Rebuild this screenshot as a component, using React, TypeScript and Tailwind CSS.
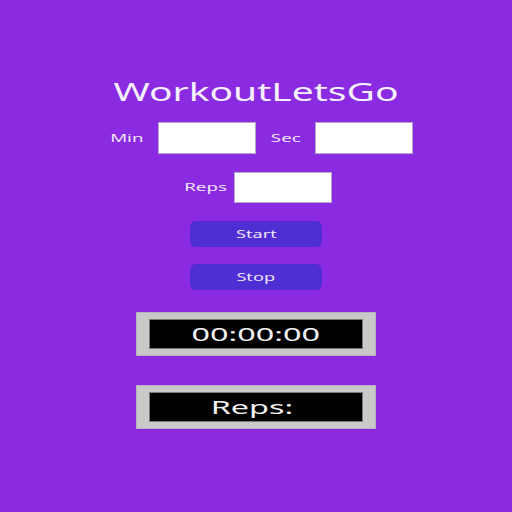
import React from "react";

const Stretch: React.FC<{ children: React.ReactNode; className?: string }> = ({
    children,
    className = "scale-x-150",
}) => (
    <span className={`inline-block origin-center whitespace-nowrap ${className}`}>
        {children}
    </span>
);

const Field: React.FC<{ label: string; labelWidth: string; gap: string; height?: string }> = ({
    label,
    labelWidth,
    gap,
    height = "h-[32px]",
}) => (
    <div className={`flex items-center ${gap}`}>
        <div className={`${labelWidth} flex justify-center text-[11px] text-[#efe4fb]`}>
            <Stretch className="scale-x-[1.7]">{label}</Stretch>
        </div>
        <div className={`w-[98px] ${height} bg-white border border-[#b4a8c4]`} />
    </div>
);

const Display: React.FC<{ text: string; className?: string; inner?: string }> = ({
    text,
    className = "",
    inner = "",
}) => (
    <div className={`w-[240px] h-[44px] bg-[#c9c9c9] border border-[#b8b0c0] px-[12px] py-[6px] ${className}`}>
        <div
            className={`w-full h-full bg-black border border-[#7a7a7a] flex items-center justify-center text-[18px] leading-none text-[#f2f2f2] ${inner}`}
        >
            <Stretch className="scale-x-[1.8]">{text}</Stretch>
        </div>
    </div>
);

const Button: React.FC<{ text: string; className?: string }> = ({ text, className = "" }) => (
    <div
        className={`w-[132px] h-[26px] rounded-[6px] bg-[#4f2ed3] flex items-center justify-center text-[11px] text-[#ece4fb] ${className}`}
    >
        <Stretch className="scale-x-[1.65]">{text}</Stretch>
    </div>
);

export default function App() {
    return (
        <div
            className="w-[512px] h-[512px] bg-[#8a2be2] flex flex-col items-center pt-[75px]"
            style={{ fontFamily: '"Noto Sans", "Open Sans", sans-serif' }}
        >
            <div className="h-[32px] leading-[32px] text-[26px] text-[#f6effd]">
                <Stretch>WorkoutLetsGo</Stretch>
            </div>

            <div className="mt-[15px] flex items-center gap-[16px] pl-[13px]">
                <Field label="Min" labelWidth="w-[30px]" gap="gap-[16px]" />
                <Field label="Sec" labelWidth="w-[28px]" gap="gap-[15px]" />
            </div>

            <div className="mt-[18px] pl-[6px]">
                <Field label="Reps" labelWidth="w-[40px]" gap="gap-[8px]" height="h-[31px]" />
            </div>

            <Button text="Start" className="mt-[18px]" />
            <Button text="Stop" className="mt-[17px]" />

            <Display text="00:00:00" className="mt-[22px]" />
            <Display text="Reps:" className="mt-[29px]" inner="pr-[8px]" />
        </div>
    );
}
